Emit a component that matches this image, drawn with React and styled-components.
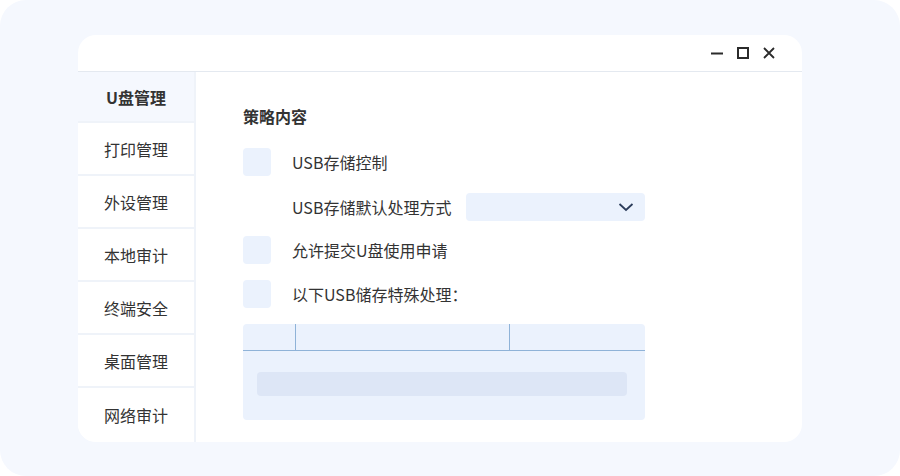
import styled, { createGlobalStyle } from "styled-components";

const Global = createGlobalStyle`
  html, body { margin: 0; padding: 0; background: #ffffff; }
  body { font-family: "Noto Sans CJK SC", "Noto Sans", sans-serif; }
`;

const Stage = styled.div`
  width: 900px;
  height: 476px;
  box-sizing: border-box;
  background: #f5f8fe;
  border-radius: 26px;
  padding: 35px 98px 34px 78px;
`;

const Window = styled.div`
  height: 100%;
  background: #ffffff;
  border-radius: 18px;
  display: flex;
  flex-direction: column;
  overflow: hidden;
`;

const TitleBar = styled.div`
  height: 37px;
  flex-shrink: 0;
  border-bottom: 1px solid #e4e9f0;
  display: flex;
  align-items: center;
  justify-content: flex-end;
  gap: 12px;
  padding-right: 26px;
  box-sizing: border-box;
`;

const WinButton = styled.svg`
  width: 14px;
  height: 14px;
  display: block;
`;

const Body = styled.div`
  flex: 1;
  display: flex;
  min-height: 0;
`;

const Sidebar = styled.nav`
  width: 118px;
  box-sizing: border-box;
  flex-shrink: 0;
  border-right: 2px solid #eff3f9;
  display: flex;
  flex-direction: column;
`;

const NavItem = styled.div`
  height: ${(p) => (p.$active ? 51 : 53)}px;
  flex-shrink: 0;
  box-sizing: border-box;
  border-bottom: 2px solid #eff3f9;
  display: flex;
  align-items: center;
  justify-content: center;
  font-size: 16px;
  color: #333333;
  font-weight: ${(p) => (p.$active ? 700 : 400)};
  background: ${(p) => (p.$active ? "#f5f8fe" : "#ffffff")};
  &:last-child { border-bottom: none; }
`;

const Content = styled.section`
  flex: 1;
  padding: 31px 0 0 47px;
  display: flex;
  flex-direction: column;
`;

const Heading = styled.h3`
  margin: 0 0 19px;
  font-size: 16px;
  font-weight: 700;
  color: #333333;
  line-height: 26px;
`;

const Row = styled.div`
  display: flex;
  align-items: center;
  height: 28px;
  margin-bottom: ${(p) => p.$gap ?? 16}px;
`;

const Box = styled.div`
  width: 28px;
  height: 28px;
  border-radius: 4px;
  background: ${(p) => (p.$hidden ? "transparent" : "#ebf2fd")};
  flex-shrink: 0;
  margin-right: 21px;
`;

const Label = styled.span`
  font-size: 16px;
  color: #333333;
  white-space: nowrap;
`;

const Select = styled.div`
  width: 179px;
  height: 28px;
  margin-left: 15px;
  background: #ebf2fd;
  border-radius: 4px;
  display: flex;
  align-items: center;
  justify-content: flex-end;
  padding-right: 11px;
  box-sizing: border-box;
`;

const Table = styled.div`
  width: 402px;
  height: 96px;
  background: #ebf2fd;
  border-radius: 4px;
  display: flex;
  flex-direction: column;
`;

const HeaderRow = styled.div`
  height: 27px;
  box-sizing: border-box;
  border-bottom: 1px solid #8fb3d8;
  display: grid;
  grid-template-columns: 53px 214px 1fr;
`;

const HeaderCell = styled.div`
  border-right: ${(p) => (p.$last ? "none" : "1px solid #8fb3d8")};
`;

const TableBody = styled.div`
  flex: 1;
  padding: 21px 18px 0 14px;
`;

const Placeholder = styled.div`
  height: 24px;
  border-radius: 4px;
  background: #dde6f6;
`;

const navs = ["U盘管理", "打印管理", "外设管理", "本地审计", "终端安全", "桌面管理", "网络审计"];

export default function App() {
  return (
    <>
      <Global />
      <Stage>
        <Window>
          <TitleBar>
            <WinButton viewBox="0 0 14 14">
              <path d="M1 7.5h12" stroke="#2b2b2b" strokeWidth="2" />
            </WinButton>
            <WinButton viewBox="0 0 14 14">
              <rect x="2" y="2" width="10" height="10" fill="none" stroke="#2b2b2b" strokeWidth="2" />
            </WinButton>
            <WinButton viewBox="0 0 14 14">
              <path d="M2 2l10 10M12 2L2 12" stroke="#2b2b2b" strokeWidth="1.8" />
            </WinButton>
          </TitleBar>
          <Body>
            <Sidebar>
              {navs.map((n, i) => (
                <NavItem key={n} $active={i === 0}>{n}</NavItem>
              ))}
            </Sidebar>
            <Content>
              <Heading>策略内容</Heading>
              <Row $gap={17}>
                <Box />
                <Label>USB存储控制</Label>
              </Row>
              <Row $gap={15}>
                <Box $hidden />
                <Label>USB存储默认处理方式</Label>
                <Select>
                  <svg width="16" height="10" viewBox="0 0 16 10">
                    <path d="M1.5 2l6.5 6 6.5-6" fill="none" stroke="#2c3d5b" strokeWidth="1.8" />
                  </svg>
                </Select>
              </Row>
              <Row>
                <Box />
                <Label>允许提交U盘使用申请</Label>
              </Row>
              <Row>
                <Box />
                <Label>以下USB储存特殊处理：</Label>
              </Row>
              <Table>
                <HeaderRow>
                  <HeaderCell />
                  <HeaderCell />
                  <HeaderCell $last />
                </HeaderRow>
                <TableBody>
                  <Placeholder />
                </TableBody>
              </Table>
            </Content>
          </Body>
        </Window>
      </Stage>
    </>
  );
}
